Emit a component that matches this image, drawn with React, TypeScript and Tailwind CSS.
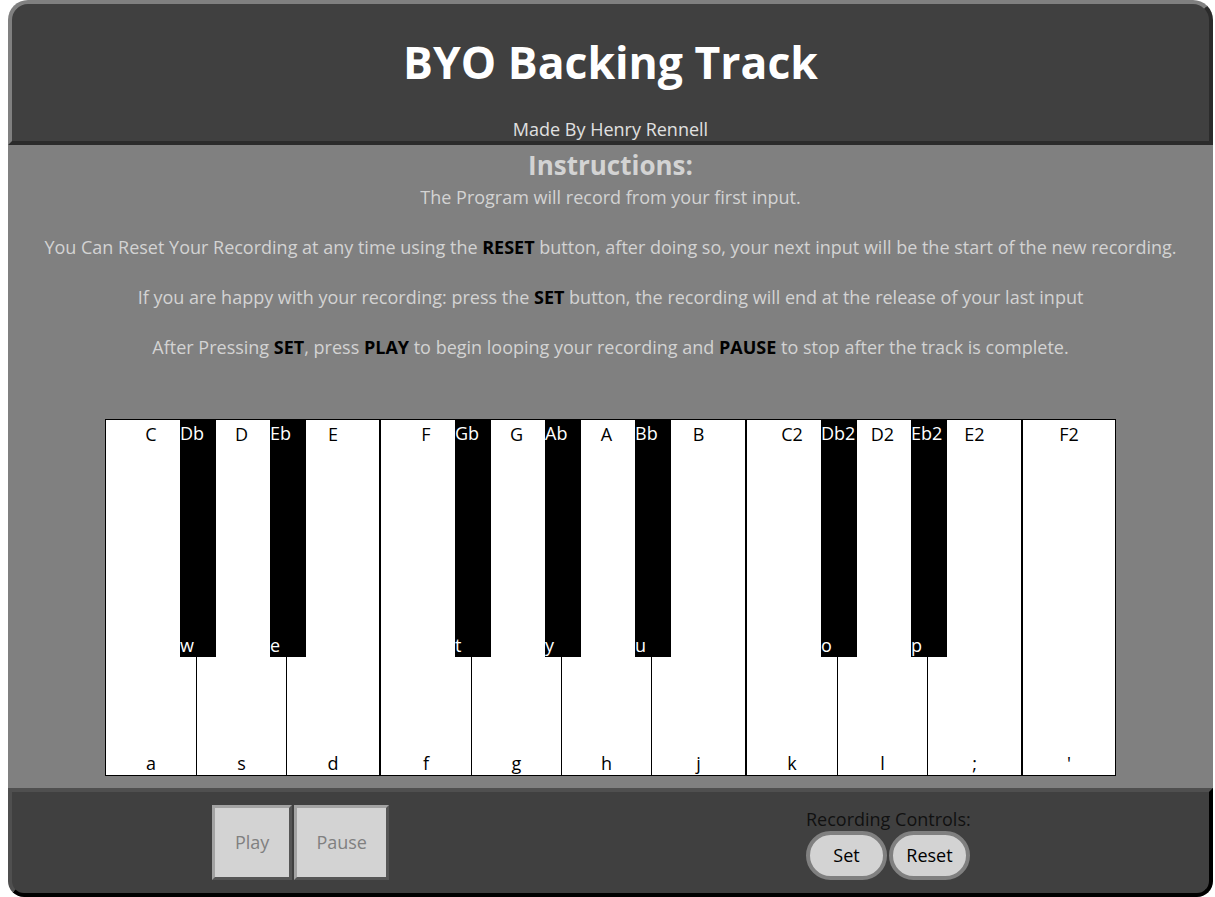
import React from 'react';

type WhiteKey = { note: string; key: string; black?: { note: string; key: string } };

const groups: { width: string; keys: WhiteKey[] }[] = [
    {
        width: 'w-[275px]',
        keys: [
            { note: 'C', key: 'a', black: { note: 'Db', key: 'w' } },
            { note: 'D', key: 's', black: { note: 'Eb', key: 'e' } },
            { note: 'E', key: 'd' },
        ],
    },
    {
        width: 'w-[366px]',
        keys: [
            { note: 'F', key: 'f', black: { note: 'Gb', key: 't' } },
            { note: 'G', key: 'g', black: { note: 'Ab', key: 'y' } },
            { note: 'A', key: 'h', black: { note: 'Bb', key: 'u' } },
            { note: 'B', key: 'j' },
        ],
    },
    {
        width: 'w-[276px]',
        keys: [
            { note: 'C2', key: 'k', black: { note: 'Db2', key: 'o' } },
            { note: 'D2', key: 'l', black: { note: 'Eb2', key: 'p' } },
            { note: 'E2', key: ';' },
        ],
    },
    {
        width: 'w-[94px]',
        keys: [{ note: 'F2', key: "'" }],
    },
];

const Key = ({ k, first, last }: { k: WhiteKey; first: boolean; last: boolean }) => (
    <div
        className={`relative flex flex-col justify-between items-center bg-white text-black ${first ? '' : 'border-l border-black'} ${last ? 'flex-1' : 'w-[90px] shrink-0'}`}
    >
        <span className="pt-[2px] leading-6">{k.note}</span>
        <span className="leading-6">{k.key}</span>
        {k.black && (
            <div className="absolute top-0 -right-[20px] z-10 w-[36px] h-[237px] bg-black text-white flex flex-col justify-between leading-6">
                <span className="pt-[1px]">{k.black.note}</span>
                <span>{k.black.key}</span>
            </div>
        )}
    </div>
);

export default function App() {
    return (
        <div className="min-h-screen bg-white pl-2 font-['Open_Sans',sans-serif] text-[18px]">
            <div className="w-[1205px]">
                <header className="h-[145px] rounded-t-[20px] border-4 border-t-[#808080] border-l-[#808080] border-r-[#2b2b2b] border-b-[#2b2b2b] bg-[#404040] flex flex-col items-center">
                    <h1 className="mt-[28px] text-[44.5px] leading-[60px] font-bold text-white">BYO Backing Track</h1>
                    <p className="mt-[25px] text-[18px] leading-6 text-[#e0e0e0]">Made By Henry Rennell</p>
                </header>

                <main className="h-[643px] bg-[#808080] flex flex-col items-center text-[#d3d3d3]">
                    <h2 className="mt-[2px] text-[26px] leading-[36px] font-bold">Instructions:</h2>
                    <p className="mt-[2px] leading-6">The Program will record from your first input.</p>
                    <p className="mt-[26px] leading-6">
                        You Can Reset Your Recording at any time using the <b className="text-black">RESET</b> button, after doing so, your next input will be the start of the new recording.
                    </p>
                    <p className="mt-[26px] leading-6">
                        If you are happy with your recording: press the <b className="text-black">SET</b> button, the recording will end at the release of your last input
                    </p>
                    <p className="mt-[26px] leading-6">
                        After Pressing <b className="text-black">SET</b>, press <b className="text-black">PLAY</b> to begin looping your recording and <b className="text-black">PAUSE</b> to stop after the track is complete.
                    </p>

                    <div className="mt-[60px] flex h-[357px]">
                        {groups.map((g, gi) => (
                            <div key={gi} className={`${g.width} flex border border-black`}>
                                {g.keys.map((k, i) => (
                                    <Key key={k.note} k={k} first={i === 0} last={i === g.keys.length - 1} />
                                ))}
                            </div>
                        ))}
                    </div>
                </main>

                <footer className="h-[109px] rounded-b-[16px] border-4 border-t-[#4f4f4f] border-l-[#4f4f4f] border-r-black border-b-black bg-[#404040] flex items-start pt-[13px]">
                    <div className="ml-[200px] flex gap-[2px]">
                        <button className="h-[75px] px-5 border-[3px] border-t-[#a3a3a3] border-l-[#a3a3a3] border-r-[#555555] border-b-[#555555] bg-[#d3d3d3] text-[#808080]">Play</button>
                        <button className="h-[75px] px-[19px] border-[3px] border-t-[#a3a3a3] border-l-[#a3a3a3] border-r-[#555555] border-b-[#555555] bg-[#d3d3d3] text-[#808080]">Pause</button>
                    </div>
                    <div className="ml-[417px] flex flex-col items-start mt-[2px]">
                        <span className="leading-6 text-[#111111]">Recording Controls:</span>
                        <div className="flex gap-[2px]">
                            <button className="w-[81px] h-[49px] rounded-full border-4 border-[#808080] bg-[#d3d3d3] text-black">Set</button>
                            <button className="w-[81px] h-[49px] rounded-full border-4 border-[#808080] bg-[#d3d3d3] text-black">Reset</button>
                        </div>
                    </div>
                </footer>
            </div>
        </div>
    );
}
